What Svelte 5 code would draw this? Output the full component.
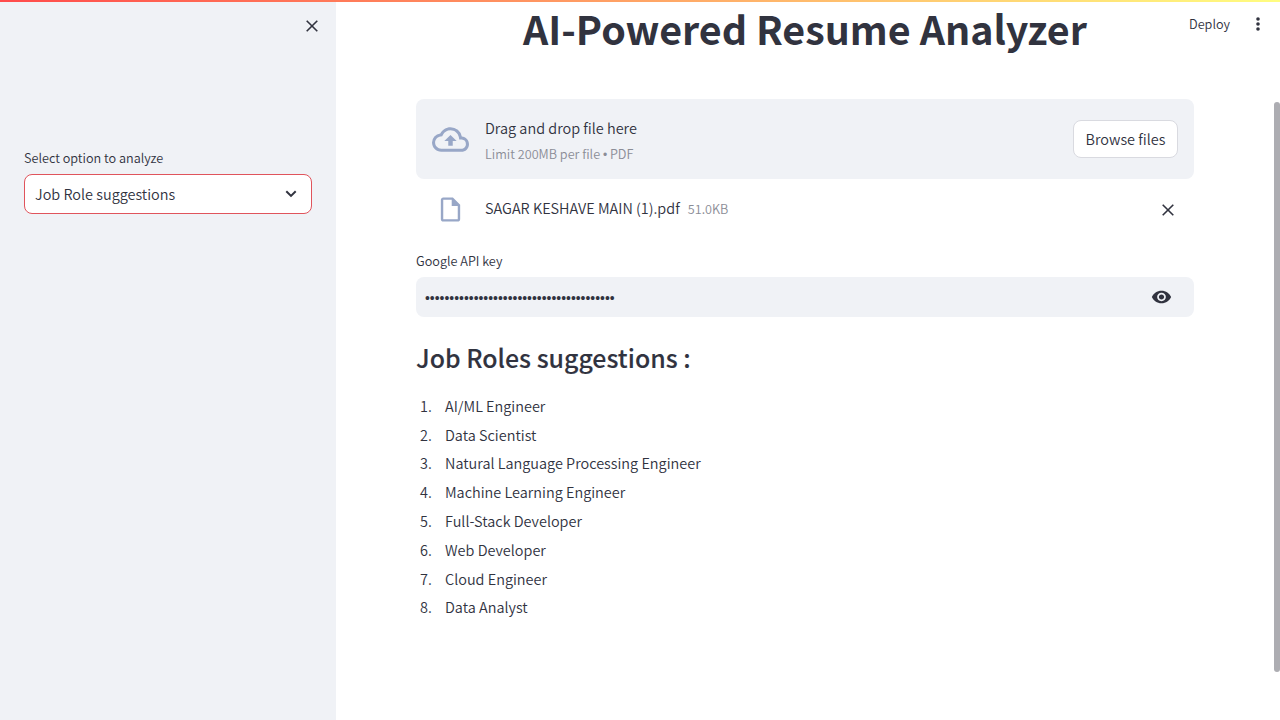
<script>
  const roles = [
    'AI/ML Engineer',
    'Data Scientist',
    'Natural Language Processing Engineer',
    'Machine Learning Engineer',
    'Full-Stack Developer',
    'Web Developer',
    'Cloud Engineer',
    'Data Analyst'
  ];
  const apiKeyMask = '•'.repeat(39);
</script>

<div class="app">
  <div class="decoration"></div>
  <aside class="sidebar">
    <button class="icon close" aria-label="Close sidebar">
      <svg width="12" height="12" viewBox="0 0 12 12"><path d="M.7.7 11.3 11.3M11.3.7.7 11.3" /></svg>
    </button>
    <div class="label">Select option to analyze</div>
    <div class="select">
      <span>Job Role suggestions</span>
      <svg width="12" height="8" viewBox="0 0 12 8"><path d="M1.3 1.3 6 5.9 10.7 1.3" /></svg>
    </div>
  </aside>

  <main class="main">
    <h1>AI-Powered Resume Analyzer</h1>
    <section class="dropzone">
      <svg class="cloud" width="37" height="37" viewBox="0 0 24 24">
        <path d="M19.35 10.04A7.49 7.49 0 0 0 12 4C9.11 4 6.6 5.64 5.35 8.04A5.994 5.994 0 0 0 0 14c0 3.31 2.69 6 6 6h13c2.76 0 5-2.24 5-5 0-2.64-2.05-4.78-4.65-4.96zM19 18H6c-2.21 0-4-1.79-4-4 0-2.05 1.53-3.76 3.56-3.97l1.07-.11.5-.95A5.469 5.469 0 0 1 12 6c2.62 0 4.88 1.86 5.39 4.43l.3 1.5 1.53.11A2.98 2.98 0 0 1 22 15c0 1.65-1.35 3-3 3zM8 13h2.55v3h2.9v-3H16l-4-4z" />
      </svg>
      <div class="instructions">
        <span class="prompt">Drag and drop file here</span>
        <small>Limit 200MB per file <span class="bullet">•</span> PDF</small>
      </div>
      <button class="browse">Browse files</button>
    </section>
    <div class="file">
      <svg class="doc" width="29" height="29" viewBox="0 0 24 24">
        <path d="M14 2H6c-1.100 0-1.990.9-1.990 2L4 20c0 1.100.89 2 1.990 2H18c1.100 0 2-.9 2-2V8l-6-6zM6 20V4h7v5h5v11H6z" />
      </svg>
      <span class="filename">SAGAR KESHAVE MAIN (1).pdf</span>
      <span class="size">51.0KB</span>
      <button class="icon remove" aria-label="Remove file">
        <svg width="12" height="12" viewBox="0 0 12 12"><path d="M.7.7 11.3 11.3M11.3.7.7 11.3" /></svg>
      </button>
    </div>
    <div class="label keylabel">Google API key</div>
    <div class="password">
      <span class="mask">{apiKeyMask}</span>
      <svg width="21" height="20" viewBox="0 0 24 24" preserveAspectRatio="none">
        <path d="M12 4.500C7 4.500 2.730 7.610 1 12c1.730 4.390 6 7.500 11 7.500s9.270-3.110 11-7.500c-1.730-4.390-6-7.500-11-7.500zM12 17c-2.760 0-5-2.240-5-5s2.240-5 5-5 5 2.240 5 5-2.240 5-5 5zm0-8c-1.660 0-3 1.340-3 3s1.340 3 3 3 3-1.340 3-3-1.340-3-3-3z" />
      </svg>
    </div>
    <h3>Job Roles suggestions :</h3>
    <ol>
      {#each roles as role, i}
        <li><span class="num">{i + 1}.</span><span>{role}</span></li>
      {/each}
    </ol>
  </main>

  <header class="toolbar">
    <span>Deploy</span>
    <svg width="4" height="14" viewBox="0 0 4 14"><circle cx="2" cy="2" r="1.800" /><circle cx="2" cy="7" r="1.800" /><circle cx="2" cy="12" r="1.800" /></svg>
  </header>
  <div class="scrollbar"></div>
</div>

<style>
  :global(body) { margin: 0; overflow: hidden; }
  .app {
    position: relative;
    display: flex;
    width: 1280px;
    height: 720px;
    overflow: hidden;
    background: #fff;
    color: #31333f;
    font-family: "Noto Sans CJK SC", "Noto Sans", sans-serif;
    font-size: 14.460px;
    font-weight: 350;
    line-height: 24px;
    white-space: nowrap;
  }
  .app * { box-sizing: border-box; }
  .decoration {
    position: absolute;
    inset: 0 0 auto;
    height: 2px;
    background: linear-gradient(90deg, #ff4b4b, #fffd80);
    z-index: 2;
  }
  button { font: inherit; color: inherit; padding: 0; }
  .icon { display: flex; border: 0; background: none; }
  .icon svg, .select svg { fill: none; stroke: #31333f; stroke-width: 1.6; }
  .sidebar {
    flex: none;
    display: flex;
    flex-direction: column;
    width: 336px;
    padding: 20px 24px;
    background: #f0f2f6;
  }
  .close { align-self: flex-end; margin-right: -6px; }
  .label { font-size: 12.670px; line-height: 20px; }
  .sidebar .label { margin-top: 116px; }
  .select {
    display: flex;
    align-items: center;
    justify-content: space-between;
    height: 40px;
    margin-top: 6px;
    padding: 0 14px 0 10px;
    border: 1px solid #e0545c;
    border-radius: 8px;
    background: #fff;
  }
  .select svg { stroke-width: 2; }
  .main {
    display: flex;
    flex-direction: column;
    width: 778px;
    margin-left: 80px;
  }
  h1 {
    margin: 1px 0 0;
    font-size: 39.400px;
    line-height: 53px;
    font-weight: 700;
    text-align: center;
  }
  .dropzone {
    display: flex;
    align-items: center;
    height: 80px;
    margin-top: 45px;
    padding: 0 16px;
    border-radius: 8px;
    background: #f0f2f6;
  }
  .cloud, .doc { fill: #98a7c7; }
  .instructions { display: flex; flex-direction: column; margin: 0 auto 0 16px; padding-top: 2px; }
  .instructions small { font-size: 12.670px; line-height: 20px; margin-top: 4px; color: #8b8d96; }
  .bullet { font-family: "Liberation Sans", sans-serif; font-size: 12px; }
  .browse {
    width: 105px;
    height: 38px;
    padding-bottom: 1px;
    border: 1px solid #d9dae0;
    border-radius: 8px;
    background: #fff;
  }
  .file { display: flex; align-items: center; height: 60px; padding: 0 20px; }
  .filename { margin: -2px 0 0 20px; }
  .size { margin-left: 8px; font-size: 12.670px; color: #8b8d96; }
  .remove { margin: 2px 0 0 auto; }
  .keylabel { margin-top: 12px; }
  .password {
    display: flex;
    align-items: center;
    justify-content: space-between;
    height: 40px;
    margin-top: 6px;
    padding: 0 22px 0 9px;
    border-radius: 8px;
    background: #f0f2f6;
  }
  .mask { padding-top: 1px; font-family: "Liberation Sans", sans-serif; font-size: 13.900px; }
  .password svg { fill: #31333f; }
  h3 {
    margin: 23px 0 0;
    font-size: 24.900px;
    line-height: 34px;
    font-weight: 500;
    -webkit-text-stroke: 0.1px #31333f;
  }
  ol { list-style: none; margin: 17.800px 0 0; padding: 0 0 0 4px; }
  li { display: flex; height: 28.800px; line-height: 28.800px; }
  .num { width: 25px; }
  .toolbar {
    position: absolute;
    top: 12px;
    right: 20px;
    display: flex;
    align-items: center;
    gap: 26px;
    font-size: 12.670px;
  }
  .toolbar svg { fill: #31333f; }
  .scrollbar {
    position: absolute;
    top: 102px;
    right: 0;
    width: 6px;
    height: 570px;
    border-radius: 3px;
    background: #adadb2;
  }
</style>
